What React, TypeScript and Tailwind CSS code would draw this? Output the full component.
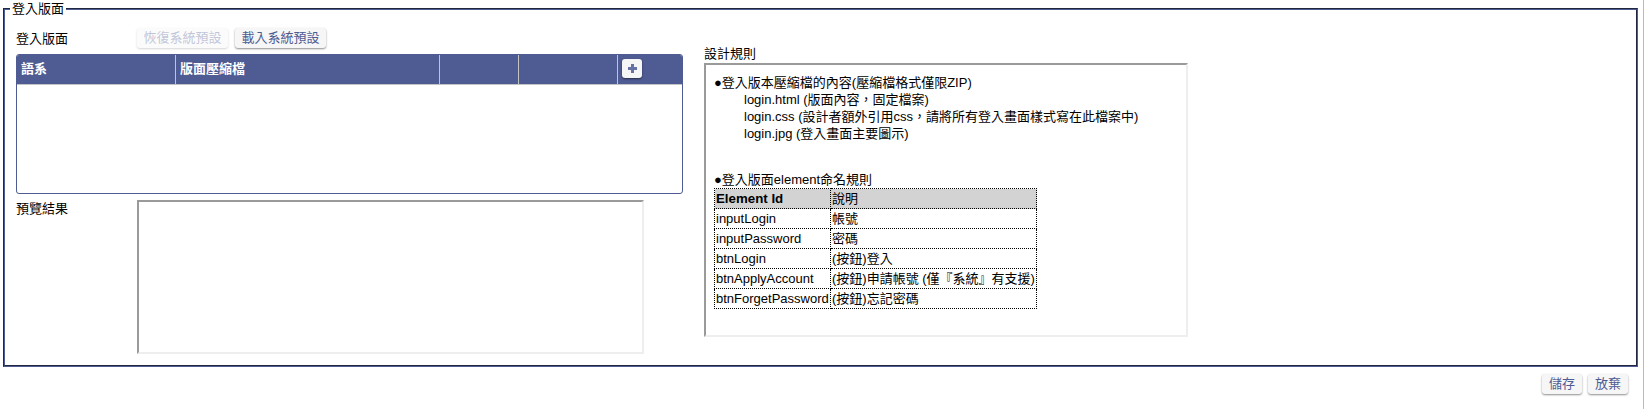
import type { ReactNode } from "react";

const rules = [
  ["inputLogin", "帳號"],
  ["inputPassword", "密碼"],
  ["btnLogin", "(按鈕)登入"],
  ["btnApplyAccount", "(按鈕)申請帳號 (僅『系統』有支援)"],
  ["btnForgetPassword", "(按鈕)忘記密碼"],
];

const inset = "border-2 border-t-[#9a9a9a] border-l-[#9a9a9a] border-r-[#eeeeee] border-b-[#eeeeee]";

function Button({ children, disabled = false }: { children: ReactNode; disabled?: boolean }) {
  return (
    <button
      disabled={disabled}
      className="h-5 min-w-10 rounded-[3px] bg-[#f6f6f6] px-[6.5px] leading-5 whitespace-nowrap text-[#4f5b93] shadow-[0_1px_2px_rgba(0,0,0,0.45)] disabled:opacity-35"
    >
      {children}
    </button>
  );
}

export default function App() {
  return (
    <div className="h-[409px] w-[1644px] overflow-hidden border-r border-[#bbbbbb] bg-white pl-[3px] font-['Liberation_Sans','Noto_Sans_CJK_TC',sans-serif] text-[13px] leading-[17px] text-black">
      <fieldset className="h-[367px] w-[1635px] border-2 border-[#4f5b93] pl-[11px] [border-style:groove]">
        <legend className="-ml-[6px] h-[18px] px-[2px] leading-[18px]">登入版面</legend>
        <div className="flex items-start">
          <div className="w-[688px]">
            <div className="flex h-[36px] items-start pt-[10px]">
              <div className="w-[121px] leading-[21px]">登入版面</div>
              <div className="flex gap-[7px]">
                <Button disabled>恢復系統預設</Button>
                <Button>載入系統預設</Button>
              </div>
            </div>
            <div className="h-[140px] w-[667px] overflow-hidden rounded-[3px] border border-[#4f5b93]">
              <div className="grid h-[30px] grid-cols-[159px_264px_79px_99px_1fr] border-b border-[#c4c4c4] bg-[#4f5b93] font-bold text-white">
                <div className="border-r border-[#c4c4c4] pl-1 leading-[27px]">語系</div>
                <div className="border-r border-[#c4c4c4] pl-1 leading-[27px]">版面壓縮檔</div>
                <div className="border-r border-[#c4c4c4]" />
                <div className="border-r border-[#c4c4c4]" />
                <div className="pt-1 pl-1">
                  <button className="flex h-[19px] w-5 items-center justify-center rounded-[3px] bg-[#f6f6f6] shadow-[0_1px_2px_rgba(0,0,0,0.5)]">
                    <svg width="9" height="9" viewBox="0 0 9 9" fill="#6672a5">
                      <path d="M3 0h3v3h3v3H6v3H3V6H0V3h3z" />
                    </svg>
                  </button>
                </div>
              </div>
            </div>
            <div className="flex pt-[6px]">
              <div className="w-[121px]">預覽結果</div>
              <div className={`h-[154px] w-[507px] ${inset}`} />
            </div>
          </div>
          <div className="pt-[27px]">
            <div className="h-[18px]">設計規則</div>
            <div className={`h-[274px] w-[484px] pt-[9px] pl-2 ${inset}`}>
              <div>●登入版本壓縮檔的內容(壓縮檔格式僅限ZIP)</div>
              <div className="pl-[30px]">login.html (版面內容，固定檔案)</div>
              <div className="pl-[30px]">login.css (設計者額外引用css，請將所有登入畫面樣式寫在此檔案中)</div>
              <div className="pl-[30px]">login.jpg (登入畫面主要圖示)</div>
              <div className="pt-[29px]">●登入版面element命名規則</div>
              <table className="w-[323px] table-fixed border-collapse">
                <colgroup>
                  <col className="w-[116px]" />
                  <col />
                </colgroup>
                <tbody>
                  <tr className="h-5 bg-[#d3d3d3]">
                    <td className="border border-dotted border-black p-px text-[13.3px] font-bold whitespace-nowrap">Element Id</td>
                    <td className="border border-dotted border-black p-px whitespace-nowrap">說明</td>
                  </tr>
                  {rules.map(([id, text]) => (
                    <tr key={id} className="h-5">
                      <td className="border border-dotted border-black p-px whitespace-nowrap">{id}</td>
                      <td className="border border-dotted border-black p-px whitespace-nowrap">{text}</td>
                    </tr>
                  ))}
                </tbody>
              </table>
            </div>
          </div>
        </div>
      </fieldset>
      <div className="flex justify-end gap-[6px] pt-[7px] pr-[15px]">
        <Button>儲存</Button>
        <Button>放棄</Button>
      </div>
    </div>
  );
}
